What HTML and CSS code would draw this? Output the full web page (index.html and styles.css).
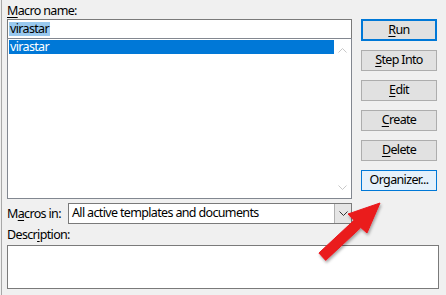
FILE: index.html
```html
<!DOCTYPE html>
<html>
<head>
<meta charset="utf-8">
<link rel="stylesheet" href="styles.css">
</head>
<body>
<div class="dialog">
  <div class="top">
    <div class="left">
      <div class="label"><u>M</u>acro name:</div>
      <div class="input"><span class="sel">virastar</span></div>
      <div class="list">
        <div class="items">
          <div class="item">virastar</div>
        </div>
        <div class="scroll">
          <svg width="17" height="158" viewBox="0 0 17 158">
            <polyline points="4.5,13.5 8.5,9.5 12.5,13.5" fill="none" stroke="#c8c8c8" stroke-width="1"/>
            <polyline points="4.5,146.5 8.5,150.5 12.5,146.5" fill="none" stroke="#c8c8c8" stroke-width="1"/>
          </svg>
        </div>
      </div>
    </div>
    <div class="buttons">
      <div class="btn default"><u>R</u>un</div>
      <div class="btn"><u>S</u>tep Into</div>
      <div class="btn"><u>E</u>dit</div>
      <div class="btn"><u>C</u>reate</div>
      <div class="btn"><u>D</u>elete</div>
      <div class="btn hover">Or<u>g</u>anizer...</div>
    </div>
  </div>
  <div class="macros-row">
    <div class="label">M<u>a</u>cros in:</div>
    <div class="select">
      <span class="val">All active templates and documents</span>
      <span class="drop">
        <svg width="9" height="5" viewBox="0 0 9 5"><polyline points="0.5,0.5 4.5,4.5 8.5,0.5" fill="none" stroke="#333" stroke-width="1"/></svg>
      </span>
    </div>
  </div>
  <div class="label desc-label">Descr<u>i</u>ption:</div>
  <div class="desc"></div>
</div>
<svg class="arrow" width="80" height="80" viewBox="0 0 80 80">
  <defs>
    <filter id="sh" x="-20%" y="-20%" width="140%" height="140%">
      <feDropShadow dx="1" dy="2" stdDeviation="1.5" flood-color="#000" flood-opacity="0.35"/>
    </filter>
  </defs>
  <polygon filter="url(#sh)" fill="#ea1a1f" stroke="#ea1a1f" stroke-width="1" stroke-linejoin="round" points="70,8 57,38 50.8,32.6 15.7,65.4 8.9,58 44,25.3 38,19"/>
</svg>
</body>
</html>
```
FILE: styles.css
```css
html, body {
  margin: 0;
  padding: 0;
}
body {
  width: 446px;
  height: 295px;
  background: #f0f0f0;
  font-family: "Noto Sans", "Segoe UI", sans-serif;
  font-size: 12.5px;
  letter-spacing: -0.65px;
  color: #000;
  overflow: hidden;
  position: relative;
}
.dialog {
  height: 295px;
  box-sizing: border-box;
  border-left: 1px solid #a8a8a8;
  margin-left: 1px;
  padding: 3px 0 0 5px;
  display: flex;
  flex-direction: column;
}
u { text-decoration: underline; text-underline-offset: 2px; }
.label {
  line-height: 16px;
  height: 16px;
}
.top {
  display: flex;
  gap: 9px;
}
.left {
  width: 345px;
  display: flex;
  flex-direction: column;
}
.input {
  height: 19px;
  box-sizing: border-box;
  background: #fff;
  border: 1px solid #7a7a7a;
  border-bottom: none;
  padding: 1px 0 0 1px;
  line-height: 15px;
}
.sel {
  background: #99c9ef;
  display: inline-block;
  padding: 0 1px;
  line-height: 14px;
  height: 14px;
}
.list {
  height: 161px;
  box-sizing: border-box;
  border: 1px solid #828790;
  background: #fff;
  display: flex;
}
.items {
  flex: 1;
  padding: 1px 0 0 1px;
}
.item {
  background: #0078d7;
  color: #fff;
  height: 14px;
  line-height: 14px;
  padding-left: 1px;
}
.scroll {
  width: 17px;
  background: #fff;
}
.scroll svg { display: block; }
.buttons {
  display: flex;
  flex-direction: column;
  gap: 9px;
  padding-top: 16px;
  width: 76px;
}
.btn {
  height: 21px;
  box-sizing: border-box;
  background: #e1e1e1;
  border: 1px solid #adadad;
  text-align: center;
  line-height: 18px;
}
.btn.default {
  height: 22px;
  border: 2px solid #0078d7;
  line-height: 17px;
}
.btn.hover {
  background: #e5f1fb;
  border-color: #0078d7;
}
.macros-row {
  display: flex;
  align-items: center;
  margin-top: 4px;
  height: 21px;
}
.macros-row .label {
  width: 61px;
}
.select {
  width: 284px;
  height: 21px;
  box-sizing: border-box;
  border: 1px solid #7a7a7a;
  background: #fff;
  display: flex;
  align-items: stretch;
}
.select .val {
  flex: 1;
  padding-left: 3px;
  line-height: 18px;
}
.select .drop {
  width: 16px;
  background: #e5e5e5;
  border-left: 1px solid #b0b0b0;
  display: flex;
  align-items: center;
  justify-content: center;
}
.desc-label {
  margin-top: 3px;
}
.desc {
  margin-top: 2px;
  width: 432px;
  height: 44px;
  box-sizing: border-box;
  border: 1px solid #7a7a7a;
  background: #fff;
}
.arrow {
  position: absolute;
  left: 310px;
  top: 195px;
}
```
